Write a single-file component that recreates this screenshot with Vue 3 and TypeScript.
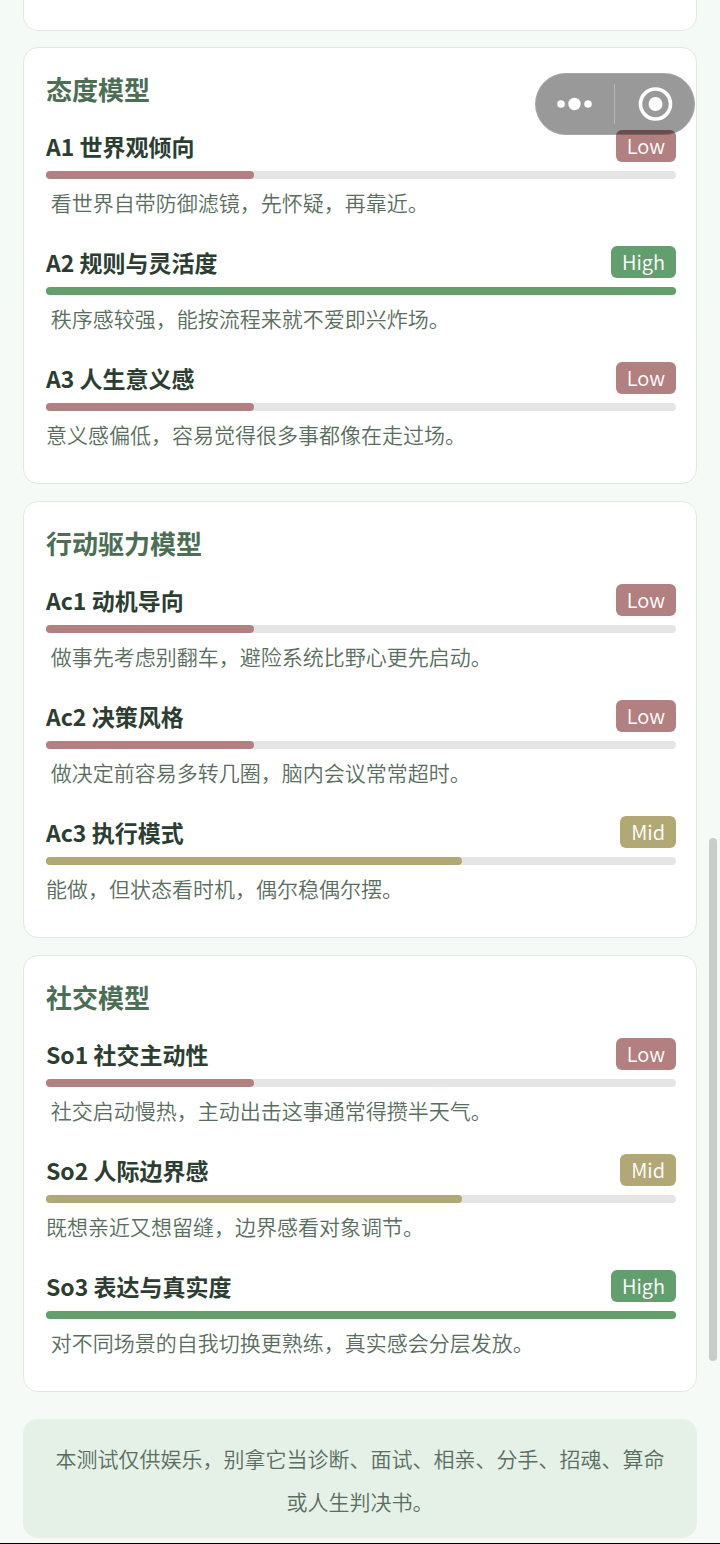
<script setup lang="ts">
type Level = 'Low' | 'Mid' | 'High'

interface Dimension {
  code: string
  name: string
  level: Level
  text: string
}

interface Model {
  title: string
  dimensions: Dimension[]
}

const percent: Record<Level, number> = { Low: 33, Mid: 66, High: 100 }

const models: Model[] = [
  {
    title: '态度模型',
    dimensions: [
      { code: 'A1', name: '世界观倾向', level: 'Low', text: ' 看世界自带防御滤镜，先怀疑，再靠近。' },
      { code: 'A2', name: '规则与灵活度', level: 'High', text: ' 秩序感较强，能按流程来就不爱即兴炸场。' },
      { code: 'A3', name: '人生意义感', level: 'Low', text: '意义感偏低，容易觉得很多事都像在走过场。' },
    ],
  },
  {
    title: '行动驱力模型',
    dimensions: [
      { code: 'Ac1', name: '动机导向', level: 'Low', text: ' 做事先考虑别翻车，避险系统比野心更先启动。' },
      { code: 'Ac2', name: '决策风格', level: 'Low', text: ' 做决定前容易多转几圈，脑内会议常常超时。' },
      { code: 'Ac3', name: '执行模式', level: 'Mid', text: '能做，但状态看时机，偶尔稳偶尔摆。' },
    ],
  },
  {
    title: '社交模型',
    dimensions: [
      { code: 'So1', name: '社交主动性', level: 'Low', text: ' 社交启动慢热，主动出击这事通常得攒半天气。' },
      { code: 'So2', name: '人际边界感', level: 'Mid', text: '既想亲近又想留缝，边界感看对象调节。' },
      { code: 'So3', name: '表达与真实度', level: 'High', text: ' 对不同场景的自我切换更熟练，真实感会分层发放。' },
    ],
  },
]
</script>

<template>
  <main class="page">
    <div class="card card-end"></div>

    <section v-for="model in models" :key="model.title" class="card">
      <h2 class="heading">{{ model.title }}</h2>
      <div class="list">
        <article v-for="d in model.dimensions" :key="d.code" class="item">
          <header class="row">
            <h3 class="name">{{ d.code }} {{ d.name }}</h3>
            <span class="badge" :class="d.level.toLowerCase()">{{ d.level }}</span>
          </header>
          <div class="track">
            <div class="fill" :class="d.level.toLowerCase()" :style="{ width: percent[d.level] + '%' }"></div>
          </div>
          <p class="text">{{ d.text }}</p>
        </article>
      </div>
    </section>

    <footer class="note">本测试仅供娱乐，别拿它当诊断、面试、相亲、分手、招魂、算命或人生判决书。</footer>

    <div class="capsule">
      <button type="button" class="capsule-button" aria-label="更多">
        <svg width="36" height="14" viewBox="0 0 36 14" fill="#fff">
          <circle cx="4" cy="7" r="3.8" />
          <circle cx="17.5" cy="7" r="6.2" />
          <circle cx="31" cy="7" r="3.8" />
        </svg>
      </button>
      <span class="divider"></span>
      <button type="button" class="capsule-button" aria-label="关闭">
        <svg width="36" height="36" viewBox="0 0 36 36">
          <circle cx="18.5" cy="18" r="15" fill="none" stroke="#fff" stroke-width="3.6" />
          <circle cx="18.5" cy="18" r="7" fill="#fff" />
        </svg>
      </button>
    </div>
    <div class="scroll-thumb"></div>
  </main>
</template>

<style>
body {
  margin: 0;
  background: #f4faf6;
}
</style>

<style scoped>
.page {
  position: relative;
  box-sizing: border-box;
  min-height: 100vh;
  padding: 0 23px 5px;
  border-bottom: 1px solid #000;
  background: linear-gradient(180deg, #f4faf6 0%, #f6faf7 100%);
  font-family: "Noto Sans CJK SC", "Noto Sans", sans-serif;
  color: #2c3e31;
}

.card {
  margin-bottom: 17px;
  padding: 21px 20px 31px 22px;
  border: 1px solid #e0e8e2;
  border-radius: 15px;
  background: #fff;
}

.card-end {
  margin-bottom: 16px;
  border-top: 0;
  border-radius: 0 0 15px 15px;
  padding: 0 0 30px;
}

.heading {
  margin: 0 0 21px;
  font-size: 26px;
  line-height: 40px;
  font-weight: 700;
  color: #4c6e54;
}

.list {
  display: flex;
  flex-direction: column;
  gap: 26px;
}

.row {
  display: flex;
  align-items: center;
  justify-content: space-between;
  height: 32px;
  margin-bottom: 9px;
}

.name {
  margin: 0;
  font-size: 23px;
  line-height: 32px;
  font-weight: 700;
}

.badge {
  padding: 0 11px;
  border-radius: 6px;
  font-size: 20px;
  font-weight: 350;
  line-height: 32px;
  color: #fff;
}

.track {
  height: 8px;
  border-radius: 4px;
  background: #e5e5e5;
}

.fill {
  height: 8px;
  border-radius: 4px;
}

.low {
  background: #b28080;
}

.mid {
  background: #b2a876;
}

.high {
  background: #639f6e;
}

.text {
  margin: 5px 0 0;
  font-size: 21px;
  font-weight: 350;
  line-height: 36px;
  white-space: pre-wrap;
  color: #5a6e60;
}

.note {
  margin-top: 27px;
  padding: 18px 24px 15px;
  border-radius: 15px;
  background: #e5f0e7;
  font-size: 21px;
  font-weight: 350;
  line-height: 43px;
  text-align: center;
  color: #5a6e60;
}

.capsule {
  position: absolute;
  top: 73px;
  right: 25px;
  box-sizing: border-box;
  display: grid;
  grid-template-columns: 78px 1px 1fr;
  align-items: center;
  width: 160px;
  height: 62px;
  border: 1px solid rgba(255, 255, 255, 0.12);
  border-radius: 31px;
  background: rgba(0, 0, 0, 0.4);
}

.capsule-button {
  display: flex;
  align-items: center;
  justify-content: center;
  height: 100%;
  padding: 0;
  border: 0;
  background: none;
}

.divider {
  height: 40px;
  background: rgba(255, 255, 255, 0.3);
}

.scroll-thumb {
  position: absolute;
  top: 838px;
  right: 3px;
  width: 8px;
  height: 523px;
  border-radius: 4px;
  background: #c8cdca;
}
</style>
